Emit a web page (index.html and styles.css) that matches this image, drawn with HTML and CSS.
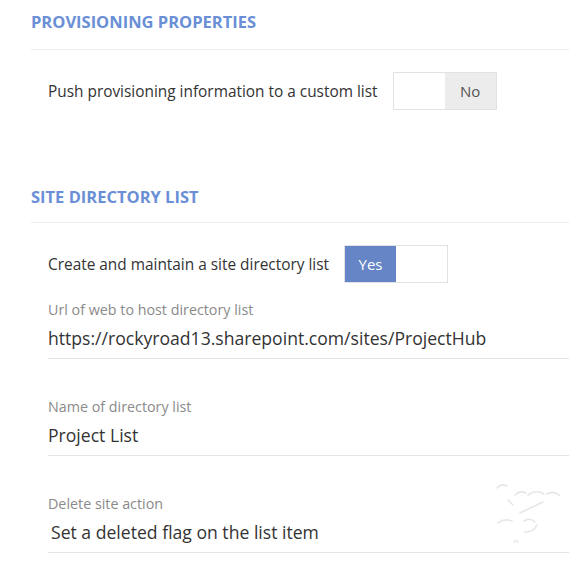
FILE: index.html
```html
<!DOCTYPE html>
<html>
<head>
<meta charset="utf-8">
<link rel="stylesheet" href="styles.css">
</head>
<body>
<div class="page">
  <section class="section">
    <h2 class="section-title">PROVISIONING PROPERTIES</h2>
    <div class="toggle-row">
      <span class="toggle-label">Push provisioning information to a custom list</span>
      <div class="toggle">
        <span class="toggle-half"></span>
        <span class="toggle-half off">No</span>
      </div>
    </div>
  </section>
  <section class="section second">
    <h2 class="section-title short">SITE DIRECTORY LIST</h2>
    <div class="toggle-row">
      <span class="toggle-label">Create and maintain a site directory list</span>
      <div class="toggle">
        <span class="toggle-half on">Yes</span>
        <span class="toggle-half"></span>
      </div>
    </div>
    <div class="field">
      <div class="field-label">Url of web to host directory list</div>
      <div class="field-value">https://rockyroad13.sharepoint.com/sites/ProjectHub</div>
    </div>
    <div class="field">
      <div class="field-label">Name of directory list</div>
      <div class="field-value">Project List</div>
    </div>
    <div class="field">
      <div class="field-label">Delete site action</div>
      <div class="field-value select">Set a deleted flag on the list item</div>
    </div>
  </section>
</div>
<svg class="watermark" width="90" height="90" viewBox="0 0 90 90" fill="none" stroke="#e6e6e6" stroke-width="1.6" stroke-linecap="round">
  <path d="M17 18 Q22 13 27 16"/>
  <path d="M35 25 Q40 20 46 23"/>
  <path d="M48 25 Q56 19 64 24"/>
  <path d="M67 24 Q74 20 80 26"/>
  <path d="M28 30 L33 35"/>
  <path d="M40 43 L63 32"/>
  <path d="M18 53 Q24 48 32 51"/>
  <path d="M44 51 Q50 47 55 52"/>
  <path d="M45 62 Q54 62 57 55"/>
  <path d="M34 72 Q36 69 38 72"/>
</svg>
</body>
</html>
```
FILE: styles.css
```css
html, body {
  margin: 0;
  padding: 0;
  background: #fff;
}
body {
  font-family: "Open Sans", "Liberation Sans", sans-serif;
  color: #333;
  position: relative;
  width: 569px;
  height: 572px;
  overflow: hidden;
}
.page {
  padding-left: 31px;
}
.section-title {
  margin: 0;
  font-size: 16.5px;
  font-weight: 700;
  color: #6a8fd6;
  line-height: 22px;
  padding-top: 11px;
  padding-bottom: 16px;
  border-bottom: 1px solid #ebebeb;
}
.section-title.short {
  padding-bottom: 14px;
}
.section.second {
  margin-top: 65px;
}
.toggle-row {
  display: flex;
  align-items: center;
  padding-left: 17px;
  margin-top: 22px;
  gap: 15px;
}
.toggle-label {
  font-size: 15.4px;
  color: #333;
}
.toggle {
  display: flex;
  border: 1px solid #e2e2e2;
  height: 36px;
  width: 102px;
}
.toggle-half {
  flex: 1;
  display: flex;
  align-items: center;
  justify-content: center;
  font-size: 15px;
  color: #555;
  background: #fff;
}
.toggle-half.off {
  background: #ececec;
}
.toggle-half.on {
  background: #6585c6;
  color: #fff;
}
.field {
  margin-left: 17px;
  margin-top: 17px;
  border-bottom: 1px solid #e4e4e4;
}
.field + .field {
  margin-top: 38px;
}
.field-label {
  font-size: 14.3px;
  color: #8a8a8a;
  line-height: 20px;
}
.field-value {
  font-size: 17.6px;
  color: #333;
  line-height: 26px;
  padding-top: 5px;
  padding-bottom: 7px;
}
.field-value.select {
  padding-left: 3px;
}
.watermark {
  position: absolute;
  left: 480px;
  top: 470px;
}
```
